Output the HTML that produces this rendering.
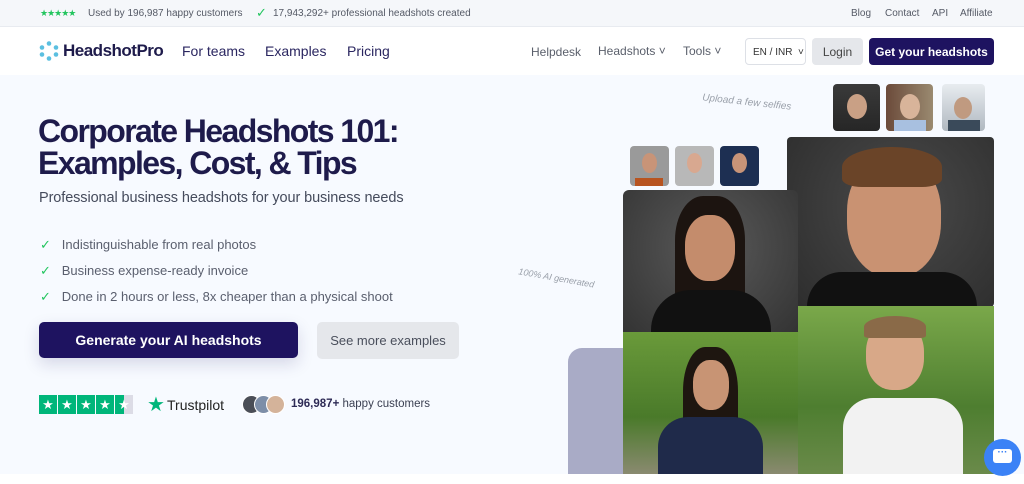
<!DOCTYPE html>
<html><head><meta charset="utf-8"><style>
*{margin:0;padding:0;box-sizing:border-box}
body{width:1024px;height:484px;overflow:hidden;background:#fff;font-family:"Liberation Sans",sans-serif;position:relative}
.a{position:absolute;white-space:nowrap}
.top{position:absolute;left:0;top:0;width:1024px;height:27px;background:#f5f7fa;border-bottom:1px solid #e8ebf0;font-size:10px;color:#555a66}
.nav{position:absolute;left:0;top:28px;width:1024px;height:47px;background:#fff}
.hero{position:absolute;left:0;top:75px;width:1024px;height:399px;background:#f7faff}
.ph{position:absolute;border-radius:4px}
</style></head><body>
<div class="top">
 <span class="a" style="left:40px;top:8px;color:#22c55e;font-size:9px;letter-spacing:-1px">★★★★★</span>
 <span class="a" style="left:88px;top:8px">Used by 196,987 happy customers</span>
 <span class="a" style="left:256px;top:5px;color:#22c55e;font-size:13px">✓</span>
 <span class="a" style="left:273px;top:8px">17,943,292+ professional headshots created</span>
 <span class="a" style="left:851px;top:8px">Blog</span>
 <span class="a" style="left:885px;top:8px">Contact</span>
 <span class="a" style="left:932px;top:8px">API</span>
 <span class="a" style="left:960px;top:8px">Affiliate</span>
</div>
<div class="nav">
 <svg class="a" style="left:39px;top:13px" width="20" height="20" viewBox="0 0 20 20"><g fill="#5bbfe0"><circle cx="10" cy="2.5" r="2.3"/><circle cx="17" cy="6.5" r="2.3"/><circle cx="17" cy="13.5" r="2.3"/><circle cx="10" cy="17.5" r="2.3"/><circle cx="3" cy="13.5" r="2.3"/><circle cx="3" cy="6.5" r="2.3"/></g></svg>
 <span class="a" style="left:63px;top:13px;font-size:17px;font-weight:bold;color:#1e1b4b;letter-spacing:-0.5px">HeadshotPro</span>
 <span class="a" style="left:182px;top:15px;font-size:14px;color:#2a2660">For teams</span>
 <span class="a" style="left:265px;top:15px;font-size:14px;color:#2a2660">Examples</span>
 <span class="a" style="left:347px;top:15px;font-size:14px;color:#2a2660">Pricing</span>
 <span class="a" style="left:531px;top:17px;font-size:12px;color:#5a5f6b">Helpdesk</span>
 <span class="a" style="left:598px;top:16px;font-size:12px;color:#5a5f6b">Headshots ˅</span>
 <span class="a" style="left:683px;top:16px;font-size:12px;color:#5a5f6b">Tools ˅</span>
 <div class="a" style="left:745px;top:10px;width:61px;height:27px;border:1px solid #dde0e6;border-radius:4px;background:#fff;font-size:10px;color:#333;padding:8px 0 0 7px">EN / INR &nbsp;˅</div>
 <div class="a" style="left:812px;top:10px;width:51px;height:27px;border-radius:4px;background:#e5e7eb;font-size:12px;color:#444;text-align:center;padding-top:7px">Login</div>
 <div class="a" style="left:869px;top:10px;width:125px;height:27px;border-radius:4px;background:#1e1360;font-size:12px;font-weight:bold;color:#fff;text-align:center;padding-top:7px">Get your headshots</div>
</div>
<div class="hero"></div>
<div class="a" style="left:38px;top:115px;font-size:32px;font-weight:bold;color:#1e1b4b;letter-spacing:-1.6px;line-height:32px">Corporate Headshots 101:<br>Examples, Cost, &amp; Tips</div>
<div class="a" style="left:39px;top:190px;font-size:14.5px;color:#454b5c;letter-spacing:-0.1px">Professional business headshots for your business needs</div>
<div class="a" style="left:40px;top:232px;font-size:13px;color:#5a5f6e;line-height:26px"><span style="color:#22c55e">✓</span>&nbsp;&nbsp; Indistinguishable from real photos<br><span style="color:#22c55e">✓</span>&nbsp;&nbsp; Business expense-ready invoice<br><span style="color:#22c55e">✓</span>&nbsp;&nbsp; Done in 2 hours or less, 8x cheaper than a physical shoot</div>
<div class="a" style="left:39px;top:322px;width:259px;height:36px;border-radius:5px;background:#1e1360;color:#fff;font-weight:bold;font-size:14px;text-align:center;padding-top:10px;box-shadow:0 6px 16px rgba(30,19,96,.15)">Generate your AI headshots</div>
<div class="a" style="left:317px;top:322px;width:142px;height:37px;border-radius:5px;background:#e5e7eb;color:#4a4f5c;font-size:13px;text-align:center;padding-top:11px">See more examples</div>
<div class="a" style="left:39px;top:395px;display:flex;gap:1px">
 <span style="width:18px;height:19px;background:#00b67a;color:#fff;font-size:13px;text-align:center;line-height:19px">★</span><span style="width:18px;height:19px;background:#00b67a;color:#fff;font-size:13px;text-align:center;line-height:19px">★</span><span style="width:18px;height:19px;background:#00b67a;color:#fff;font-size:13px;text-align:center;line-height:19px">★</span><span style="width:18px;height:19px;background:#00b67a;color:#fff;font-size:13px;text-align:center;line-height:19px">★</span><span style="width:18px;height:19px;background:linear-gradient(90deg,#00b67a 50%,#dcdce6 50%);color:#fff;font-size:13px;text-align:center;line-height:19px">★</span>
</div>
<span class="a" style="left:147px;top:392px;color:#00b67a;font-size:20px">★</span>
<span class="a" style="left:167px;top:397px;font-size:14px;color:#222">Trustpilot</span>
<div class="a" style="left:242px;top:395px;width:19px;height:19px;border-radius:50%;background:#4a4e57;border:1px solid #fff"></div>
<div class="a" style="left:254px;top:395px;width:19px;height:19px;border-radius:50%;background:#7d8ea8;border:1px solid #fff"></div>
<div class="a" style="left:266px;top:395px;width:19px;height:19px;border-radius:50%;background:#d4b39a;border:1px solid #fff"></div>
<span class="a" style="left:291px;top:398px;font-size:11.5px;color:#3a3f52"><b style="color:#2d2a55">196,987+</b> happy customers</span>

<!-- right visuals -->
<span class="a" style="left:702px;top:97px;font-size:10px;color:#9aa0aa;font-style:italic;transform:rotate(6deg)">Upload a few selfies</span>
<span class="a" style="left:518px;top:273px;font-size:9px;color:#9aa0aa;font-style:italic;transform:rotate(10deg)">100% AI generated</span>
<div class="ph" style="left:833px;top:84px;width:47px;height:47px;background:linear-gradient(#3a3a3a,#262626)"><div style="position:absolute;left:14px;top:10px;width:20px;height:25px;border-radius:50%;background:#c9a085"></div></div>
<div class="ph" style="left:886px;top:84px;width:47px;height:47px;background:linear-gradient(90deg,#6b4a3a,#9a8a70)"><div style="position:absolute;left:14px;top:10px;width:20px;height:25px;border-radius:50%;background:#d8b49a"></div><div style="position:absolute;left:8px;top:36px;width:32px;height:11px;background:#a8c0e0"></div></div>
<div class="ph" style="left:942px;top:84px;width:43px;height:47px;background:linear-gradient(#e8ecf0,#b0b8c0)"><div style="position:absolute;left:12px;top:13px;width:18px;height:22px;border-radius:50%;background:#c09a80"></div><div style="position:absolute;left:6px;top:36px;width:32px;height:11px;background:#3a4a5a"></div></div>
<div class="ph" style="left:630px;top:146px;width:39px;height:40px;background:#9a9a9a"><div style="position:absolute;left:12px;top:7px;width:15px;height:20px;border-radius:50%;background:#c89478"></div><div style="position:absolute;left:5px;top:32px;width:28px;height:8px;background:#b85420"></div></div>
<div class="ph" style="left:675px;top:146px;width:39px;height:40px;background:#b8b8b8"><div style="position:absolute;left:12px;top:7px;width:15px;height:20px;border-radius:50%;background:#d8a890"></div></div>
<div class="ph" style="left:720px;top:146px;width:39px;height:40px;background:#1d2f52"><div style="position:absolute;left:12px;top:7px;width:15px;height:20px;border-radius:50%;background:#c89478"></div></div>
<div class="a" style="left:568px;top:348px;width:70px;height:126px;border-radius:14px 0 0 0;background:#a9abc6"></div>
<div class="ph" style="left:787px;top:137px;width:207px;height:170px;background:radial-gradient(circle at 55% 40%,#4a4a4a,#2c2c2c)">
 <div style="position:absolute;left:60px;top:20px;width:94px;height:120px;border-radius:45%;background:#c99272"></div>
 <div style="position:absolute;left:55px;top:10px;width:100px;height:40px;border-radius:50% 50% 20% 20%;background:#6a4428"></div>
 <div style="position:absolute;left:20px;top:135px;width:170px;height:35px;border-radius:40px 40px 0 0;background:#111"></div>
</div>
<div class="ph" style="left:623px;top:190px;width:175px;height:143px;border-radius:6px 6px 0 0;background:radial-gradient(circle at 50% 40%,#5a5a5a,#333)">
 <div style="position:absolute;left:52px;top:6px;width:70px;height:110px;border-radius:40% 40% 10% 10%;background:#1c1410"></div>
 <div style="position:absolute;left:62px;top:25px;width:50px;height:66px;border-radius:45%;background:#c48c6c"></div>
 <div style="position:absolute;left:28px;top:100px;width:120px;height:43px;border-radius:40px 40px 0 0;background:#111"></div>
</div>
<div class="a" style="left:623px;top:332px;width:175px;height:142px;background:linear-gradient(#6a9a3a,#4a7a2a 60%,#8a8a70)">
 <div style="position:absolute;left:60px;top:15px;width:55px;height:110px;border-radius:40% 40% 10% 10%;background:#1e1610"></div>
 <div style="position:absolute;left:70px;top:28px;width:36px;height:50px;border-radius:45%;background:#c89474"></div>
 <div style="position:absolute;left:35px;top:85px;width:105px;height:57px;border-radius:30px 30px 0 0;background:#1f2a4a"></div>
</div>
<div class="a" style="left:798px;top:306px;width:196px;height:168px;background:linear-gradient(#7aa84a,#4e7e30 60%,#6a8a4a)">
 <div style="position:absolute;left:68px;top:14px;width:58px;height:70px;border-radius:45%;background:#d8a888"></div>
 <div style="position:absolute;left:66px;top:10px;width:62px;height:22px;border-radius:50% 50% 10% 10%;background:#8a6a48"></div>
 <div style="position:absolute;left:45px;top:92px;width:120px;height:76px;border-radius:30px 30px 0 0;background:#f2f2f2"></div>
</div>
<div class="a" style="left:984px;top:439px;width:37px;height:37px;border-radius:50%;background:#3b82f6"><div style="position:absolute;left:9px;top:10px;width:19px;height:14px;border-radius:3px;background:#fff;color:#3b82f6;font-size:10px;line-height:8px;text-align:center;font-weight:bold">···</div></div>
</body></html>
